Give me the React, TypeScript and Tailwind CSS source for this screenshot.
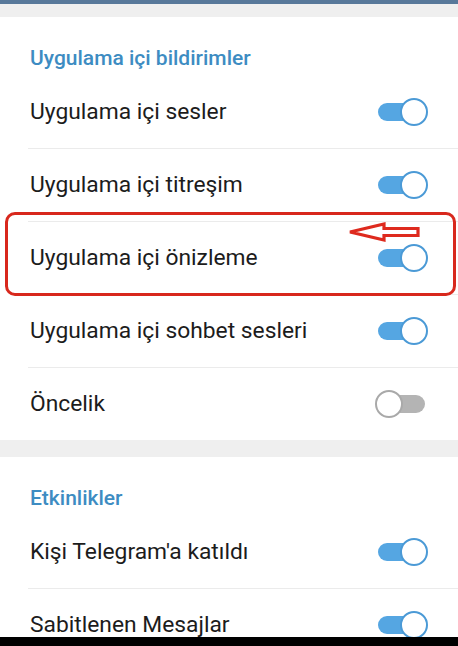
const sections = [
  {
    title: 'Uygulama içi bildirimler',
    rows: [
      { label: 'Uygulama içi sesler', on: true },
      { label: 'Uygulama içi titreşim', on: true },
      { label: 'Uygulama içi önizleme', on: true },
      { label: 'Uygulama içi sohbet sesleri', on: true },
      { label: 'Öncelik', on: false },
    ],
  },
  {
    title: 'Etkinlikler',
    rows: [
      { label: "Kişi Telegram'a katıldı", on: true },
      { label: 'Sabitlenen Mesajlar', on: true },
    ],
  },
];

const Toggle = ({ on }: { on: boolean }) => (
  <div className="relative w-[53px] h-[28px] flex items-center">
    <div
      className={`absolute left-[3px] right-[3px] h-[18px] rounded-full ${on ? 'bg-[#55a6e2]' : 'bg-[#b4b4b4]'}`}
    />
    <div
      className={`absolute top-0 w-[28px] h-[28px] rounded-full bg-white border-[2.5px] ${
        on ? 'right-0 border-[#4b9ad6]' : 'left-0 border-[#a9a9a9]'
      }`}
    />
  </div>
);

export default function App() {
  return (
    <div
      className="relative w-[458px] h-[646px] overflow-hidden bg-white"
      style={{ fontFamily: 'Roboto, "Noto Sans", sans-serif' }}
    >
      <div className="h-[4px] bg-[#58789a]" />
      {sections.map((section, si) => (
        <div key={section.title}>
          <div className={`${si === 0 ? 'h-[13px]' : 'h-[17px]'} bg-[#efefef]`} />
          <div className="h-[59px] pl-[30px] pt-[28px] text-[21px] leading-[26px] font-medium text-[#3d8cc2]">
            {section.title}
          </div>
          {section.rows.map((row, i) => (
            <div key={row.label}>
              {i > 0 && <div className="ml-[28px] h-px bg-[#ebebeb]" />}
              <div className="h-[72px] flex items-center justify-between pl-[30px] pr-[30px]">
                <span className="text-[22.8px] text-[#1c1c1c]">{row.label}</span>
                <Toggle on={row.on} />
              </div>
            </div>
          ))}
        </div>
      ))}

      {/* highlight box */}
      <div className="absolute left-[5px] top-[212px] w-[451px] h-[84px] border-[3.5px] border-[#d8281d] rounded-[10px]" />
      {/* arrow */}
      <svg className="absolute left-[347px] top-[221px]" width="76" height="23" viewBox="0 0 76 23">
        <path
          d="M3 11 L37 3 L37 7.5 L71 7.5 L71 14.5 L37 14.5 L37 19 Z"
          fill="#fff"
          stroke="#de2a1e"
          strokeWidth="3.2"
          strokeLinejoin="miter"
        />
      </svg>

      <div className="absolute left-0 right-0 bottom-0 h-[9px] bg-black" />
    </div>
  );
}
